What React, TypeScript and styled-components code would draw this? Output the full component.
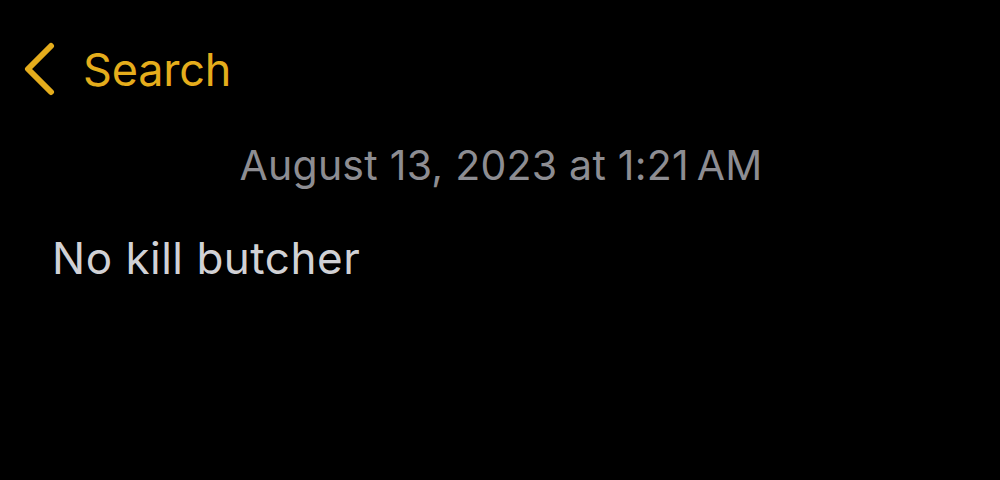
import React from "react";
import styled, { createGlobalStyle } from "styled-components";

const Global = createGlobalStyle`
  html, body { margin: 0; padding: 0; background: #000; }
  body { font-family: Inter, "Liberation Sans", sans-serif; }
`;

const Page = styled.div`
  width: 1000px;
  height: 480px;
  background: #000;
  display: flex;
  flex-direction: column;
  overflow: hidden;
`;

const NavBar = styled.div`
  display: flex;
  align-items: center;
  height: 72px;
  margin-top: 33px;
  padding-left: 23px;
  gap: 28px;
  color: #e5ad1c;
`;

const BackLabel = styled.span`
  font-size: 45px;
  font-weight: 400;
  letter-spacing: -0.2px;
  line-height: 1;
`;

const DateLine = styled.div`
  text-align: center;
  color: #8d8d92;
  font-size: 41px;
  letter-spacing: 0.25px;
  line-height: 1;
  margin-top: 40px;
  padding-left: 2px;
`;

const Body = styled.div`
  color: #d1d1d5;
  font-size: 44px;
  letter-spacing: 0.5px;
  line-height: 1;
  margin-top: 50px;
  padding-left: 52px;
`;

const Chevron = () => (
  <svg width="32" height="54" viewBox="0 0 32 54" fill="none">
    <path d="M28 4 L5 27 L28 50" stroke="#e5ad1c" strokeWidth="6" strokeLinecap="round" strokeLinejoin="round" />
  </svg>
);

export default function App() {
  return (
    <Page>
      <Global />
      <NavBar>
        <Chevron />
        <BackLabel>Search</BackLabel>
      </NavBar>
      <DateLine>August 13, 2023 at 1:21{"\u202F"}AM</DateLine>
      <Body>No kill butcher</Body>
    </Page>
  );
}
